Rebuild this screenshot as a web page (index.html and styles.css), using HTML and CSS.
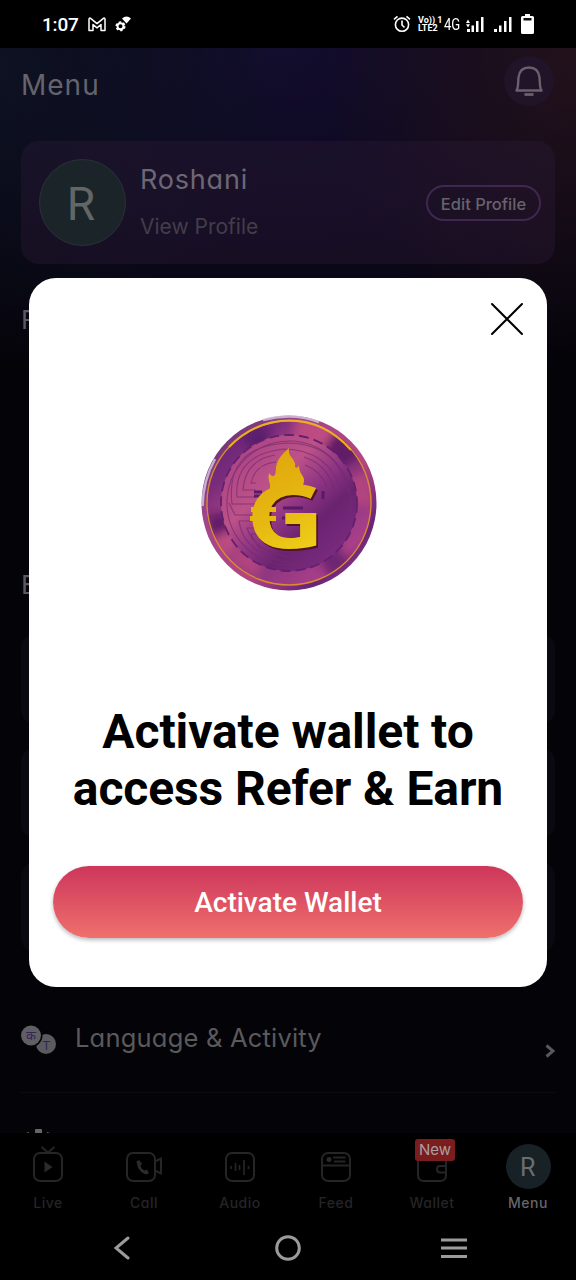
FILE: index.html
```html
<!DOCTYPE html>
<html lang="en">
<head>
<meta charset="utf-8">
<title>Menu</title>
<link rel="stylesheet" href="styles.css">
</head>
<body>
<div class="phone">
  <header class="status">
    <span class="clock">1:07</span>
    <svg class="gmail" width="18" height="15" viewBox="0 0 18 15"><path d="M1 13.5V2.2Q1 .8 2.3 1.2L9 6.6l6.700-5.400Q17 .8 17 2.200V13.500H13V7.500L9 10.800 5 7.500V13.500Z" fill="none" stroke="#fff" stroke-width="1.500" stroke-linejoin="round"/></svg>
    <svg class="gear" width="17" height="16" viewBox="0 0 17 16"><circle cx="5.500" cy="10.300" r="3" fill="none" stroke="#fff" stroke-width="2"/><circle cx="5.500" cy="10.300" r="4.300" fill="none" stroke="#fff" stroke-width="1.500" stroke-dasharray="2.400 2.100"/><path d="M7 2.500Q11.500-1.300 16 2.500L11.500 7.500Z" fill="#fff"/></svg>
    <span class="grow"></span>
    <svg class="alarm" width="18" height="18" viewBox="0 0 18 18" fill="none" stroke="#fff" stroke-width="1.600"><circle cx="9" cy="9.700" r="6.600"/><path d="M9 5.500V10l2.500 2.500M1 4.300l3.500-3M17 4.300l-3.500-3"/></svg>
    <span class="volte"><span>Vo)) 1</span><span>LTE2</span></span>
    <span class="net">4G</span>
    <svg class="sig1" width="19" height="17" viewBox="0 0 19 17" fill="#fff"><path d="M2 13h3v3H2zM6.500 9.500H9V16H6.500zM11 5h2.500v11H11zM16 1h2.500v15H16zM1 7l2-3.500L5 7zM1 8.200h4l-2 3.300z"/></svg>
    <svg class="sig2" width="19" height="17" viewBox="0 0 19 17" fill="#fff"><path d="M1 13h3v3H1zM6 9.500h2.500V16H6zM11 5h2.500v11H11zM16 1h2.500v15H16z"/></svg>
    <svg class="batt" width="13" height="20" viewBox="0 0 13 20"><path d="M4 0h5v2h2.500Q13 2 13 3.500v15q0 1.500-1.500 1.500h-10Q0 20 0 18.500v-15Q0 2 1.500 2H4z" fill="#fff"/><rect x="2.500" y="4" width="8" height="2.500" fill="#111"/></svg>
  </header>

  <main class="page">
    <div class="top">
      <h1 class="title">Menu</h1>
      <span class="bell"><svg width="28" height="32" viewBox="0 0 28 32" fill="none" stroke="#68606b" stroke-width="2.400"><path d="M1.500 25.500C3.500 23 3 17 3.500 12.500 4.200 6 8.200 2.500 14 2.500s9.800 3.500 10.500 10C25 17 24.500 23 26.500 25.500Z" stroke-linejoin="round"/><path d="M9.500 29.500h9" stroke-width="2.800"/></svg></span>
    </div>

    <section class="profile">
      <span class="avatar">R</span>
      <div class="who"><span class="name">Roshani</span><span class="view">View Profile</span></div>
      <span class="edit">Edit Profile</span>
    </section>

    <h2 class="group first">F</h2>
    <h2 class="group second">E</h2>
    <div class="tiles"><div class="tile"></div><div class="tile"></div><div class="tile"></div></div>

    <div class="row">
      <svg class="lang" width="36" height="30" viewBox="0 0 36 30"><circle cx="25" cy="19" r="10" fill="#5b5a5e"/><circle cx="10" cy="10.500" r="11.500" fill="#050307"/><circle cx="10" cy="10.500" r="10" fill="#605f64"/><text x="10" y="15" class="hindi">क</text><text x="25.500" y="25" class="tee">T</text></svg>
      <span class="label">Language &amp; Activity</span>
      <svg class="chev" width="10" height="14" viewBox="0 0 10 14"><path d="M1.500 1.500L8 7l-6.500 5.500" fill="none" stroke="#59585b" stroke-width="3"/></svg>
    </div>
    <div class="next"><svg width="28" height="5" viewBox="0 0 28 5"><path d="M10 5V2q0-1 1-1h5q1 0 1 1v3zM1 5l3-1V5zM22 5V4l3 1z" fill="#666"/></svg></div>
  </main>

  <nav class="tabs">
    <div class="tab"><span class="ico"><svg width="32" height="38" viewBox="0 0 32 38"><rect x="2" y="9" width="28" height="28" rx="6"/><path d="M9.500 3l6.500 5.500L22.500 3"/><path class="fill" d="M12.500 17.500l8 5.500-8 5.500z"/></svg></span><span>Live</span></div>
    <div class="tab"><span class="ico"><svg width="38" height="38" viewBox="0 0 38 38"><rect x="2" y="9" width="28" height="28" rx="6"/><path d="M31 17l5-2.500v15L31 27"/><path class="fill" d="M11.500 17.500l2.500-1.500 3 3.500-1.500 2.500q1 3 4 4.500l2.500-1 2 3.500q-2 2-4.500 1-7-3-8-12.500z"/></svg></span><span>Call</span></div>
    <div class="tab"><span class="ico"><svg width="32" height="38" viewBox="0 0 32 38"><rect x="2" y="9" width="28" height="28" rx="6"/><path d="M7 22v3M11.500 19v8M15.500 21v5M20 16v15M24.500 22v3" stroke-width="1.700"/></svg></span><span>Audio</span></div>
    <div class="tab"><span class="ico"><svg width="32" height="38" viewBox="0 0 32 38"><rect x="2" y="9" width="28" height="28" rx="6"/><path d="M2 21.500h28M13 13.500h12.500M14 17.500h11.500"/><circle class="fill" cx="9" cy="15.500" r="2.500"/></svg></span><span>Feed</span></div>
    <div class="tab"><span class="ico"><svg width="32" height="38" viewBox="0 0 32 38"><path d="M2 12v19q0 6 6 6h16q6 0 6-6V17q0-3-3-5M30 22h-6q-3 0-3 3.300t3 3.300h6"/></svg><span class="new">New</span></span><span>Wallet</span></div>
    <div class="tab on"><span class="ico"><span class="mini">R</span></span><span>Menu</span></div>
  </nav>

  <footer class="system">
    <svg width="16" height="24" viewBox="0 0 16 24"><path d="M14 2L2 12 14 22" stroke-linecap="round"/></svg>
    <svg width="26" height="26" viewBox="0 0 26 26"><circle cx="13" cy="13" r="11.300"/></svg>
    <svg width="26" height="22" viewBox="0 0 26 22"><path d="M0 3h26M0 11h26M0 19.500h26"/></svg>
  </footer>

  <section class="modal">
    <svg class="close" width="34" height="34" viewBox="0 0 34 34"><path d="M2 2l30 30M32 2L2 32" stroke="#000" stroke-width="2" stroke-linecap="round"/></svg>
    <svg class="coin" width="176" height="176" viewBox="0 0 176 176">
      <defs>
        <linearGradient id="rim" x1="0" y1="0" x2="1" y2="1"><stop offset="0" stop-color="#5b2173"/><stop offset=".22" stop-color="#792b7c"/><stop offset=".4" stop-color="#b44b82"/><stop offset=".6" stop-color="#89347f"/><stop offset=".82" stop-color="#a83f88"/><stop offset="1" stop-color="#6b2377"/></linearGradient>
        <linearGradient id="edge" x1="0" y1="0" x2="1" y2="1"><stop offset="0" stop-color="#4a2a6b"/><stop offset=".3" stop-color="#a1458d"/><stop offset=".6" stop-color="#b54580"/><stop offset=".8" stop-color="#692378"/><stop offset="1" stop-color="#b2498a"/></linearGradient>
        <linearGradient id="face" x1="0" y1=".1" x2=".8" y2=".95"><stop offset="0" stop-color="#a84084"/><stop offset=".38" stop-color="#bc5288"/><stop offset=".58" stop-color="#8e3482"/><stop offset=".75" stop-color="#6a2370"/><stop offset="1" stop-color="#7b2b80"/></linearGradient>
        <linearGradient id="gold" gradientUnits="userSpaceOnUse" x1="55" y1="35" x2="110" y2="135"><stop offset="0" stop-color="#dfa30c"/><stop offset=".6" stop-color="#e6b912"/><stop offset="1" stop-color="#efcf18"/></linearGradient>
        <filter id="soft" x="-20%" y="-20%" width="140%" height="140%"><feGaussianBlur stdDeviation="5"/></filter>
        <clipPath id="disc"><circle cx="88" cy="88" r="83"/></clipPath>
      </defs>
      <circle cx="88" cy="88" r="87.500" fill="url(#edge)"/>
      <path d="M1.500 91Q2 66 14 44M62 5Q91-3 118 7" fill="none" stroke="#d6cde0" stroke-width="2.500" opacity=".8"/>
      <circle cx="88" cy="88" r="82" fill="url(#rim)"/>
      <g clip-path="url(#disc)"><g filter="url(#soft)" opacity=".85">
        <path d="M88 88L95 0l42 10zM88 88L8 105l14 35z" fill="#c04d82"/>
        <path d="M88 88L138 10l25 30zM88 88L5 100l5 24z" fill="#571863"/>
        <path d="M88 88L168 55l6 35zM88 88L30 145l25 20z" fill="#b7477f"/>
        <path d="M88 88L40 20l24-12z" fill="#551a6b"/>
        <path d="M88 88L130 165l22-17z" fill="#63206f"/>
      </g></g>
      <circle cx="88" cy="88" r="82" fill="none" stroke="#d78b32" stroke-width="1.400"/>
      <path d="M28 32Q53 6 88 5.500T150 35" fill="none" stroke="#ecae25" stroke-width="2"/>
      <circle cx="88" cy="88" r="68" fill="url(#face)"/>
      <circle cx="88" cy="88" r="68" fill="none" stroke="#63206e" stroke-width="1.800" stroke-dasharray="10 5"/>
      <g fill="none" stroke="#752b70" stroke-width="1.100" opacity=".7">
        <path d="M55 75H42q2-30 32-35M55 68h-5q4-19 25-21M55 82H36Q33 40 82 34q46 0 59 44M55 89H31Q24 32 85 28q53 0 63 51"/>
        <path d="M54 100H34q-4-8-6-12M56 106H38q4 30 42 39M62 113H46q8 25 45 29M57 119h-7q15 34 55 28M103 42q25 8 31 36M104 50q16 6 22 22"/>
        <circle cx="88" cy="88" r="62"/>
      </g>
      <path d="M53 77h8M53 81h8M82 93h20M81 103h20M122 76v8" stroke="#581b65" stroke-width="3"/>
      <g class="shade" transform="translate(1.800 1.800)"><text class="gee" x="45" y="133" textLength="79" lengthAdjust="spacingAndGlyphs">G</text></g>
      <g fill="url(#gold)">
        <path d="M66 80q5-8 2-14-1-4 0-8 3 5 6 2 1-3 1-8 1-9 13-19-1 6 3 10 4 5 3 9 3 2 4-2 0 6 3 10 4 5 0 12l-6 8-16-2z"/>
        <text class="gee" x="45" y="133" textLength="79" lengthAdjust="spacingAndGlyphs">G</text>
        <path d="M50 92h25v5H50zM49 101h26v5H49z"/>
      </g>
    </svg>
    <h2 class="headline">Activate wallet to<br>access Refer &amp; Earn</h2>
    <button class="cta">Activate Wallet</button>
  </section>
</div>
</body>
</html>
```
FILE: styles.css
```css
* { box-sizing: border-box; }
body { margin: 0; background: #000; }
h1, h2 { margin: 0; font-weight: 400; }
svg { display: block; flex: none; }

.phone {
  position: relative;
  width: 576px;
  height: 1280px;
  overflow: hidden;
  display: flex;
  flex-direction: column;
  background: #000;
  font-family: Inter, "Open Sans", sans-serif;
  font-feature-settings: "cv11";
}

/* status bar */
.status {
  height: 48px;
  flex: none;
  display: flex;
  align-items: center;
  padding: 0 42px;
  color: #fff;
  font-family: Roboto, sans-serif;
}
.clock { width: 46px; font-size: 19px; font-weight: 500; letter-spacing: -.2px; }
.gear { margin-left: 9px; }
.grow { flex: 1; }
.alarm { margin-right: 7px; }
.volte { width: 26px; display: flex; flex-direction: column; font-size: 9px; line-height: 8px; font-weight: 700; white-space: nowrap; }
.net { width: 21px; font-size: 16px; transform: scaleX(.82); transform-origin: left; }
.sig2 { margin-left: 9px; }
.batt { margin-left: 9px; }

/* page behind the dialog */
.page {
  height: 1085px;
  flex: none;
  overflow: hidden;
  padding: 0 21px;
  background:
    radial-gradient(ellipse 250px 300px at 100% 10px, rgba(40, 20, 28, .8), transparent),
    radial-gradient(ellipse 300px 300px at 0 20px, rgba(14, 20, 36, .8), transparent),
    radial-gradient(ellipse 520px 390px at 50% 0, #130d2e, transparent),
    #040307;
}
.top { height: 93px; display: flex; justify-content: space-between; }
.title { padding: 21px 0 0 0; font-size: 28px; line-height: 32px; letter-spacing: 1px; color: #65646c; font-weight: 400; }
.bell { width: 50px; height: 50px; margin: 8px 1px 0 0; border-radius: 50%; background: #211429; display: flex; align-items: center; justify-content: center; }

.profile {
  height: 123px;
  border-radius: 18px;
  background: rgba(44, 26, 54, .38);
  display: flex;
  align-items: center;
  padding: 0 14px 0 18px;
}
.avatar { width: 87px; height: 87px; border-radius: 50%; background: #1b2428; border: 1px solid #2b3039; color: #626667; display: flex; align-items: center; justify-content: center; font: 46px Roboto, sans-serif; padding: 3px 3px 0 0; }
.who { flex: 1; padding-left: 14px; display: flex; flex-direction: column; }
.name { font-size: 27px; line-height: 32px; font-weight: 400; letter-spacing: .8px; color: #6c6774; }
.view { margin-top: 17px; font-size: 21px; line-height: 28px; font-weight: 400; letter-spacing: 0; color: #433d4a; }
.edit { width: 115px; height: 36px; border: 2px solid #402650; border-radius: 18px; font-size: 16.500px; line-height: 34px; letter-spacing: 0; text-align: center; color: #68626e; font-weight: 500; }

.group { font-size: 26px; line-height: 36px; font-weight: 400; color: #5c5a61; }
.first { margin-top: 38px; }
.second { margin-top: 229px; }
.tiles { margin-top: 31px; display: grid; gap: 24px; }
.tile { height: 90px; border-radius: 14px; background: #0b0910; }

.row { height: 110px; margin-top: 31px; border-bottom: 1px solid #0e0c10; display: flex; align-items: flex-start; }
.lang { margin-top: 42px; }
.label { flex: 1; padding: 38px 0 0 18px; font-size: 25.500px; line-height: 34px; font-weight: 400; letter-spacing: .2px; color: #5a595c; }
.chev { margin-top: 61px; }
.hindi { font: 13px "Noto Sans", sans-serif; fill: #352654; text-anchor: middle; }
.tee { font: 13px Roboto, sans-serif; fill: #352654; text-anchor: middle; }
.next { padding: 35px 0 0 4px; }

/* bottom tabs */
.tabs { height: 83px; flex: none; display: grid; grid-template-columns: repeat(6, 96px); background: #000; }
.tab { display: flex; flex-direction: column; align-items: center; font-size: 14px; line-height: 20px; letter-spacing: .5px; font-weight: 500; color: #252427; }
.tab svg { fill: none; stroke: #252427; stroke-width: 2; }
.tab .fill { fill: #2b2a2d; stroke: none; }
.ico { position: relative; height: 60px; padding-top: 11px; }
.mini { width: 45px; height: 45px; border-radius: 50%; background: #182126; color: #6a6e70; display: flex; align-items: center; justify-content: center; font: 25px Roboto, sans-serif; padding-top: 2px; }
.on { color: #67666a; }
.new { position: absolute; left: -1px; top: 6px; width: 40px; height: 22px; border-radius: 3px; background: #7b1c1f; color: #aaa0a0; font: 15px/22px Inter, sans-serif; letter-spacing: 0; text-align: center; }

/* system navigation */
.system { height: 64px; flex: none; display: flex; align-items: center; justify-content: space-between; padding: 0 109px 0 114px; fill: none; stroke: #9b9b9b; stroke-width: 3; }
.system svg:nth-child(2) { margin-left: 4px; }

/* dialog */
.modal {
  position: absolute;
  left: 29px;
  top: 278px;
  width: 518px;
  height: 709px;
  border-radius: 27px;
  background: #fff;
  padding: 24px 24px 0;
  display: flex;
  flex-direction: column;
  align-items: center;
}
.close { align-self: flex-end; margin-right: -1px; }
.coin { margin-top: 79px; margin-left: 1px; }
.gee { font: 700 88px "Open Sans", sans-serif; }
.shade { fill: #50151f; }
.headline { margin-top: 112px; font: 700 48px/57px Roboto, sans-serif; letter-spacing: -.1px; text-align: center; color: #000; white-space: nowrap; }
.cta { width: 470px; height: 72px; flex: none; margin-top: 49px; border: 0; border-radius: 36px; background: linear-gradient(#cd365b, #ef706d); box-shadow: 0 2px 4px rgba(0, 0, 0, .28); color: #fff; font: 500 28px Roboto, sans-serif; padding-top: 2px; }
```
